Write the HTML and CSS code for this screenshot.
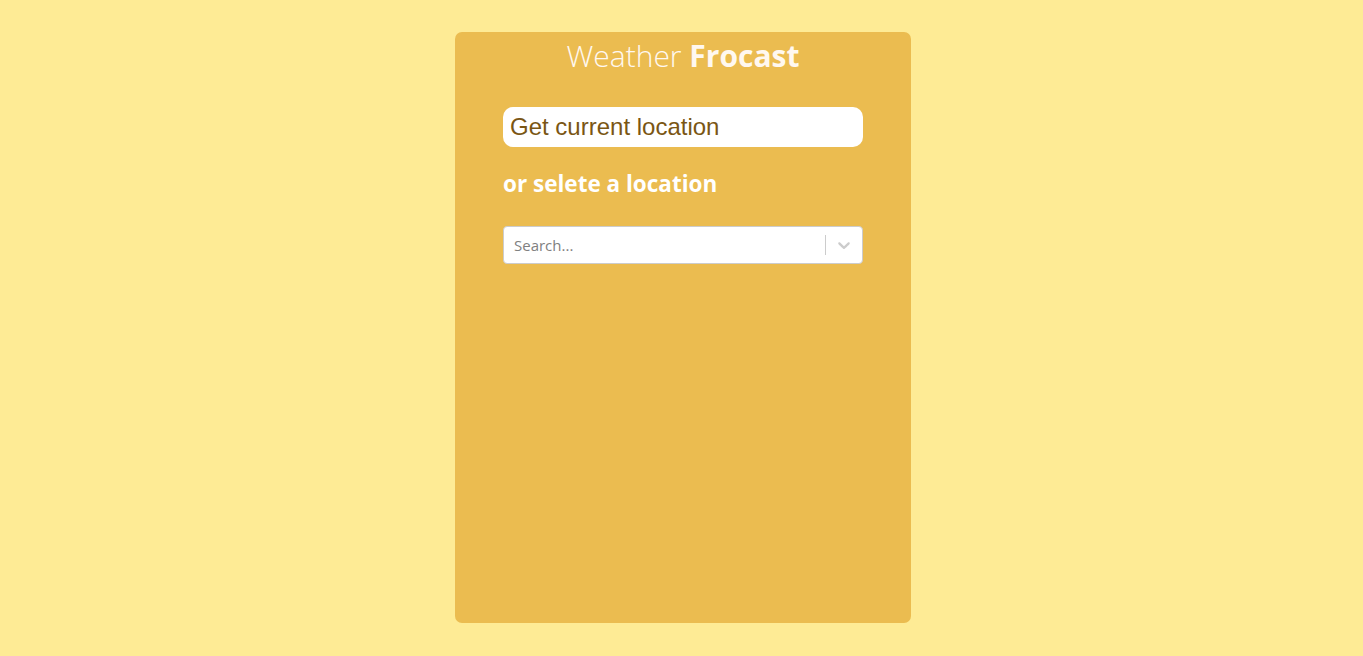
FILE: index.html
```html
<!DOCTYPE html>
<html>
<head>
<meta charset="utf-8">
<link rel="stylesheet" href="styles.css">
</head>
<body>
<main class="card">
  <h1 class="title"><span class="light">Weather</span> <span class="bold">Frocast</span></h1>
  <section class="content">
    <button class="locate">Get current location</button>
    <h2 class="or">or selete a location</h2>
    <div class="select">
      <span class="placeholder">Search...</span>
      <span class="sep"></span>
      <span class="chev">
        <svg width="20" height="20" viewBox="0 0 20 20"><path d="M4.516 7.548c.436-.446 1.043-.481 1.576 0L10 11.295l3.908-3.747c.533-.481 1.141-.446 1.574 0 .436.445.408 1.197 0 1.615-.406.418-4.695 4.502-4.695 4.502a1.095 1.095 0 0 1-1.576 0S4.924 9.581 4.516 9.163c-.409-.418-.436-1.170 0-1.615z" fill="#cccccc"/></svg>
      </span>
    </div>
  </section>
</main>
</body>
</html>
```
FILE: styles.css
```css
html, body {
  margin: 0;
  padding: 0;
}
body {
  background: #feeb95;
  font-family: "Open Sans", "Noto Sans", sans-serif;
  padding-top: 32px;
  padding-left: 3px;
  height: 656px;
  box-sizing: border-box;
}
.card {
  width: 456px;
  height: 591px;
  margin: 0 auto;
  background: #ebbc50;
  border-radius: 7px;
  box-sizing: border-box;
  padding: 0 48px;
}
.title {
  margin: 0;
  padding-top: 4px;
  text-align: center;
  color: #fff8f0;
  font-size: 30px;
  line-height: 40px;
  font-weight: 400;
}
.title .light {
  font-weight: 300;
}
.title .bold {
  font-weight: 700;
}
.content {
  padding-top: 31px;
  display: flex;
  flex-direction: column;
}
.locate {
  width: 360px;
  height: 40px;
  border: none;
  border-radius: 10px;
  background: #ffffff;
  text-align: left;
  padding: 0 7px;
  font-family: "Liberation Sans", Arial, sans-serif;
  font-size: 24px;
  color: #7a5614;
}
.or {
  margin: 23px 0 0;
  font-size: 22.5px;
  line-height: 28px;
  font-weight: 700;
  color: #ffffff;
}
.select {
  margin-top: 28px;
  height: 38px;
  box-sizing: border-box;
  background: #fff;
  border: 1px solid #cccccc;
  border-radius: 4px;
  display: flex;
  align-items: center;
  padding-left: 10px;
}
.placeholder {
  flex: 1;
  font-size: 15px;
  color: #808080;
}
.sep {
  width: 1px;
  height: 20px;
  background: #cccccc;
}
.chev {
  width: 36px;
  height: 36px;
  display: flex;
  align-items: center;
  justify-content: center;
}
```
